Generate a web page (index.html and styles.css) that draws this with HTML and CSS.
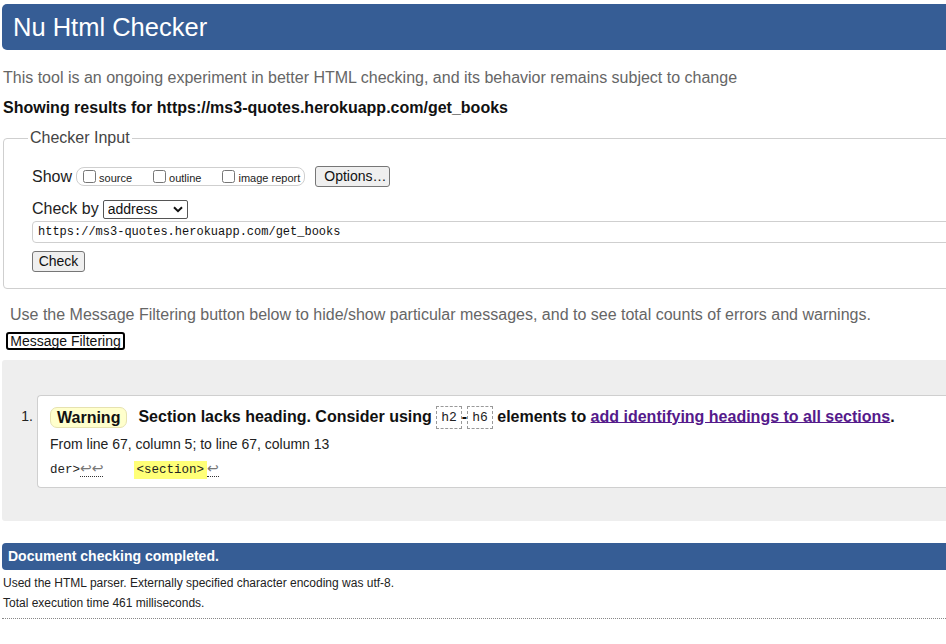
FILE: index.html
```html
<!DOCTYPE html>
<html lang="en">
<head>
<meta charset="utf-8">
<title>Nu Html Checker</title>
<link rel="stylesheet" href="styles.css">
</head>
<body>
<div class="page">
  <h1 class="title">Nu Html Checker</h1>
  <p class="intro">This tool is an ongoing experiment in better HTML checking, and its behavior remains subject to change</p>
  <p class="showing">Showing results for https://ms3-quotes.herokuapp.com/get_books</p>

  <fieldset class="checker">
    <legend class="legend">Checker Input</legend>
    <div class="row row-show">
      <span class="lbl">Show</span>
      <span class="group">
        <label class="opt"><input type="checkbox" class="cb"><span>source</span></label>
        <label class="opt"><input type="checkbox" class="cb"><span>outline</span></label>
        <label class="opt last"><input type="checkbox" class="cb"><span>image report</span></label>
      </span>
      <button class="btn btn-options">Options…</button>
    </div>
    <div class="row row-by">
      <span class="lbl">Check by</span>
      <span class="selwrap">
        <select class="sel"><option>address</option></select>
        <svg class="chev" width="10" height="7" viewBox="0 0 10 7"><path d="M1 1.2 L5 5.2 L9 1.2" fill="none" stroke="#111" stroke-width="2"/></svg>
      </span>
    </div>
    <div class="urlbox">https://ms3-quotes.herokuapp.com/get_books</div>
    <button class="btn btn-check">Check</button>
  </fieldset>

  <p class="filter-note">Use the Message Filtering button below to hide/show particular messages, and to see total counts of errors and warnings.</p>
  <button class="btn-filter">Message Filtering</button>

  <section class="results">
    <div class="msg-row">
      <span class="num">1.</span>
      <div class="msg">
        <p class="msg-head"><span class="badge">Warning</span><span class="msg-text">Section lacks heading. Consider using <code class="tag">h2</code>-<code class="tag">h6</code> elements to <a class="link" href="#">add identifying headings to all sections</a>.</span></p>
        <p class="loc">From line 67, column 5; to line 67, column 13</p>
        <p class="extract">der&gt;<span class="lf">↩↩</span>    <mark class="hl">&lt;section&gt;</mark><span class="lf">↩</span></p>
      </div>
    </div>
  </section>

  <h2 class="done">Document checking completed.</h2>
  <p class="info">Used the HTML parser. Externally specified character encoding was utf-8.</p>
  <p class="info">Total execution time 461 milliseconds.</p>
  <hr class="dots">
</div>
</body>
</html>
```

FILE: styles.css
```css
html, body {
  margin: 0;
  padding: 0;
  overflow: hidden;
  background: #fff;
}
body {
  font-family: "Liberation Sans", Arial, sans-serif;
  color: #111;
}
.page {
  width: 1000px;
  display: flow-root;
}
.title {
  margin: 4px 0 0 2px;
  height: 46px;
  line-height: 46px;
  padding-left: 11px;
  font-size: 25.5px;
  font-weight: normal;
  color: #fff;
  background: #365d95;
  border-radius: 5px 0 0 5px;
}
.intro {
  margin: 18px 0 0 3px;
  line-height: 20px;
  font-size: 16px;
  color: #666;
}
.showing {
  margin: 10px 0 0 3px;
  line-height: 20px;
  font-size: 16px;
  font-weight: bold;
  color: #111;
}
.checker {
  margin: 11px 0 0 3px;
  padding: 0 0 16px 28px;
  border: 1px solid #cfcfcf;
  border-radius: 4px;
}
.legend {
  margin-left: -4px;
  padding: 0 2px;
  font-size: 16px;
  line-height: 18px;
  color: #444;
}
.row {
  display: flex;
  align-items: center;
}
.row-show {
  margin-top: 19px;
  height: 21px;
}
.lbl {
  font-size: 16px;
  color: #222;
}
.group {
  display: flex;
  align-items: center;
  margin-left: 4px;
  height: 17px;
  padding: 0 4px 0 5px;
  border: 1px solid #cfcfcf;
  border-radius: 8px;
}
.opt {
  display: flex;
  align-items: center;
  font-size: 11px;
  color: #222;
  margin-right: 20px;
}
.opt.last {
  margin-right: 0;
}
.cb {
  width: 13px;
  height: 13px;
  margin: 0 3px 0 1px;
}
.opt span {
  position: relative;
  top: 1px;
}
.btn {
  font-family: "Liberation Sans", Arial, sans-serif;
  font-size: 14px;
  color: #111;
  background: #efefef;
  border: 1px solid #767676;
  border-radius: 3px;
  padding: 0 8px;
  height: 21px;
  line-height: 19px;
}
.btn-options {
  margin-left: 10px;
  width: 75px;
}
.row-by {
  margin-top: 12px;
  height: 20px;
}
.selwrap {
  position: relative;
  display: inline-flex;
  margin-left: 4px;
}
.sel {
  appearance: none;
  -webkit-appearance: none;
  width: 85px;
  height: 19px;
  font-family: "Liberation Sans", Arial, sans-serif;
  font-size: 14px;
  line-height: 17px;
  color: #111;
  background: #fff;
  border: 1px solid #555;
  border-radius: 2px;
  padding: 0 4px;
}
.chev {
  position: absolute;
  right: 5px;
  top: 6px;
  pointer-events: none;
}
.urlbox {
  margin-top: 2px;
  height: 20px;
  line-height: 20px;
  width: 960px;
  padding-left: 5px;
  border: 1px solid #cfcfcf;
  border-radius: 4px;
  font-family: "Liberation Mono", "DejaVu Sans Mono", monospace;
  font-size: 12px;
  color: #111;
}
.btn-check {
  display: block;
  margin-top: 8px;
  width: 53px;
  padding: 0;
}
.filter-note {
  margin: 16px 0 0 10px;
  line-height: 20px;
  font-size: 16px;
  color: #666;
}
.btn-filter {
  display: block;
  margin: 7px 0 0 6px;
  height: 18px;
  width: 119px;
  padding: 0;
  font-family: "Liberation Sans", Arial, sans-serif;
  font-size: 14px;
  line-height: 14px;
  color: #111;
  background: #fff;
  border: 2px solid #000;
  border-radius: 3px;
}
.results {
  margin: 10px 0 0 2px;
  height: 161px;
  padding-top: 35px;
  box-sizing: border-box;
  background: #eeeeee;
  border-radius: 3px 0 0 3px;
}
.msg-row {
  display: flex;
  align-items: flex-start;
}
.num {
  width: 31px;
  text-align: right;
  font-size: 14px;
  line-height: 20px;
  margin-top: 11px;
  color: #222;
}
.msg {
  flex: 1;
  margin-left: 4px;
  height: 81px;
  padding: 10px 0 0 12px;
  box-sizing: content-box;
  background: #fff;
  border: 1px solid #cfcfcf;
  border-right: none;
  border-radius: 4px 0 0 4px;
}
.msg p {
  margin: 0;
}
.msg-head {
  display: flex;
  align-items: center;
  height: 22px;
  font-size: 16px;
  font-weight: bold;
  color: #111;
}
.badge {
  display: inline-block;
  height: 19px;
  line-height: 19px;
  padding: 0 6px;
  background: #ffffcc;
  border: 1px solid #e6e2b0;
  border-radius: 7px;
  margin-right: 11px;
}
.tag {
  display: inline-block;
  font-family: "Liberation Mono", "DejaVu Sans Mono", monospace;
  font-size: 13px;
  font-weight: normal;
  line-height: 21px;
  padding: 0 4px;
  border: 1px dashed #999;
  color: #222;
  vertical-align: middle;
}
.link {
  color: #551a8b;
  text-decoration: underline;
}
.loc {
  margin-top: 6px !important;
  line-height: 20px;
  font-size: 14px;
  color: #222;
}
.extract {
  margin-top: 6px !important;
  line-height: 20px;
  font-family: "Liberation Mono", "DejaVu Sans Mono", monospace;
  font-size: 12.5px;
  color: #222;
  white-space: pre;
}
.lf {
  color: #777;
  border-bottom: 1px dotted #333;
  font-family: "DejaVu Sans", sans-serif;
  font-size: 14px;
  line-height: 14px;
}
.hl {
  background: #ffff77;
  color: #222;
  padding: 2px 3px;
}
.done {
  margin: 22px 0 0 2px;
  height: 27px;
  line-height: 27px;
  padding-left: 6px;
  font-size: 14px;
  font-weight: bold;
  color: #fff;
  background: #365d95;
  border-radius: 4px 0 0 4px;
}
.info {
  margin: 0 0 0 3px;
  line-height: 20px;
  font-size: 12px;
  color: #222;
}
.done + .info {
  margin-top: 3px;
}
.dots {
  margin: 5px 0 0 2px;
  border: none;
  border-top: 1px dotted #888;
  height: 0;
}
```
